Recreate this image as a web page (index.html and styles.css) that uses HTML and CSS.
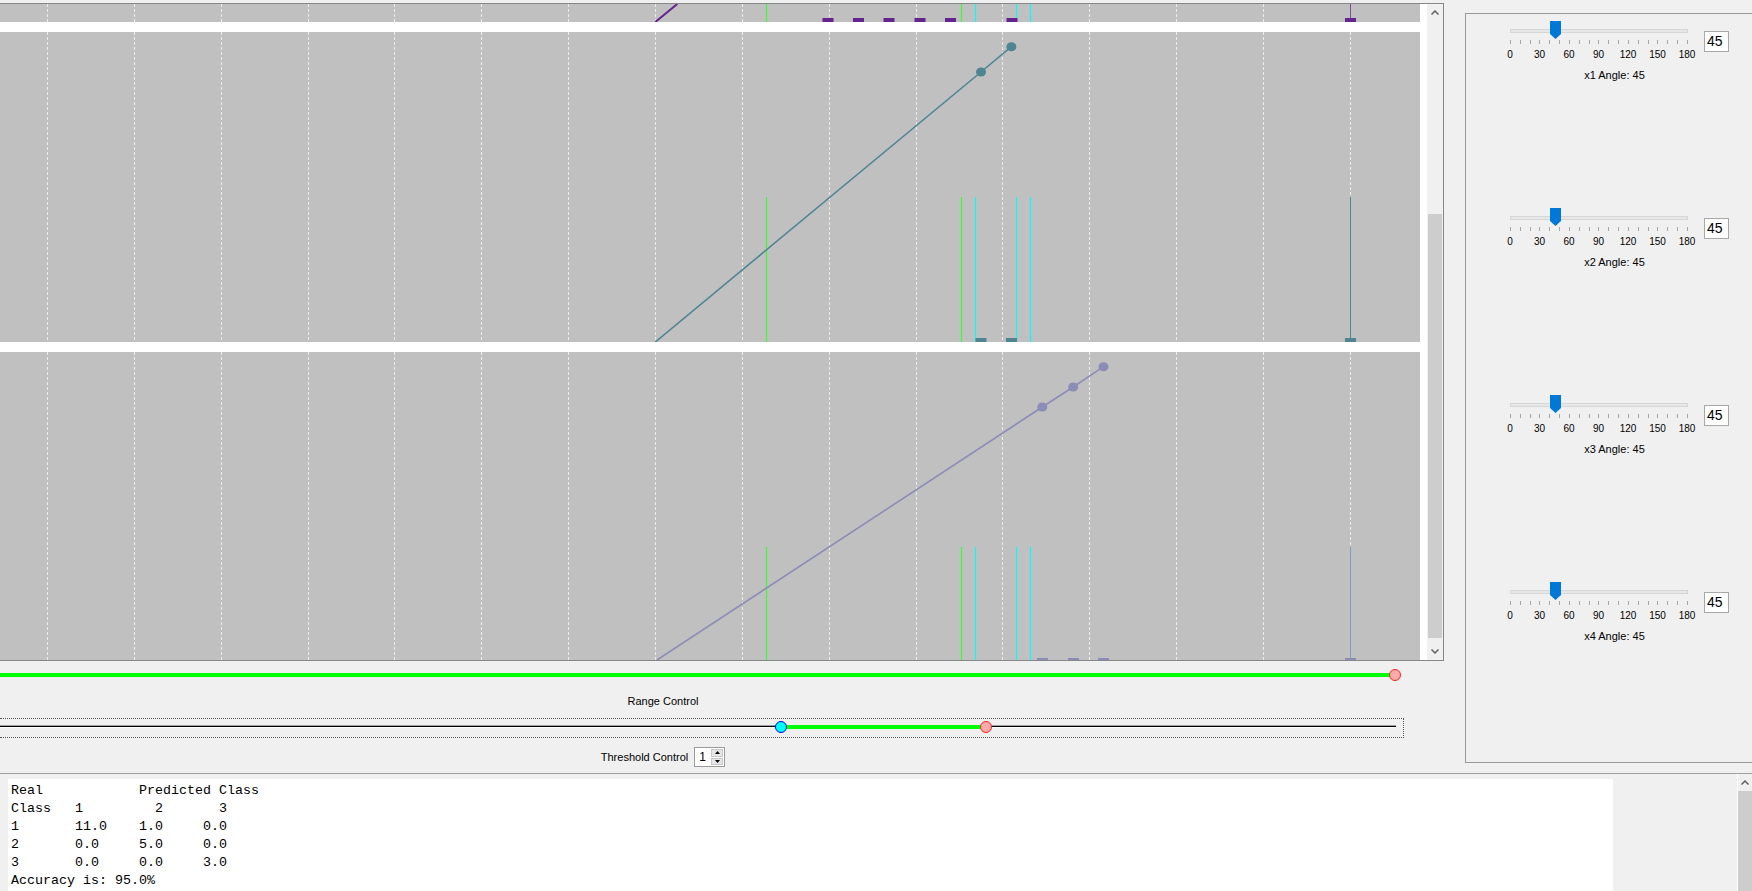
FILE: index.html
```html
<!DOCTYPE html>
<html lang="en">
<head>
<meta charset="utf-8">
<title>Classifier view</title>
<link rel="stylesheet" href="styles.css">
</head>
<body>
<div class="app">
  <div class="top">
    <div class="left-col">
      <div class="chart-frame">
        <div class="chart-content">
          <svg class="plot" width="1420" height="18" viewBox="0 0 1420 18">
            <g class="grid">
              <line x1="47.5" y1="0" x2="47.5" y2="18"/><line x1="134.5" y1="0" x2="134.5" y2="18"/><line x1="221.5" y1="0" x2="221.5" y2="18"/><line x1="308.5" y1="0" x2="308.5" y2="18"/><line x1="394.5" y1="0" x2="394.5" y2="18"/><line x1="481.5" y1="0" x2="481.5" y2="18"/><line x1="568.5" y1="0" x2="568.5" y2="18"/><line x1="655.5" y1="0" x2="655.5" y2="18"/><line x1="742.5" y1="0" x2="742.5" y2="18"/><line x1="829.5" y1="0" x2="829.5" y2="18"/><line x1="916.5" y1="0" x2="916.5" y2="18"/><line x1="1002.5" y1="0" x2="1002.5" y2="18"/><line x1="1089.5" y1="0" x2="1089.5" y2="18"/><line x1="1176.5" y1="0" x2="1176.5" y2="18"/><line x1="1263.5" y1="0" x2="1263.5" y2="18"/><line x1="1350.5" y1="0" x2="1350.5" y2="18"/>
            </g>
            <g class="green"><line x1="766.5" y1="0" x2="766.5" y2="18"/><line x1="961.5" y1="0" x2="961.5" y2="18"/></g>
            <g class="cyan"><line x1="975.5" y1="0" x2="975.5" y2="18"/><line x1="1016.5" y1="0" x2="1016.5" y2="18"/><line x1="1030.5" y1="0" x2="1030.5" y2="18"/></g>
            <line class="purple-thin" x1="1350.5" y1="0" x2="1350.5" y2="18"/>
            <polyline class="purple-line" points="655.3,18 677.3,0"/>
            <g class="purple-fill">
              <rect x="822.5" y="14" width="11" height="4"/><rect x="853" y="14" width="11" height="4"/><rect x="883.5" y="14" width="11" height="4"/><rect x="914.5" y="14" width="11" height="4"/><rect x="945" y="14" width="11" height="4"/><rect x="1006.5" y="14" width="11" height="4"/><rect x="1345" y="14" width="11" height="4"/>
            </g>
          </svg>

          <svg class="plot" width="1420" height="310" viewBox="0 0 1420 310">
            <g class="grid">
              <line x1="47.5" y1="0" x2="47.5" y2="310"/><line x1="134.5" y1="0" x2="134.5" y2="310"/><line x1="221.5" y1="0" x2="221.5" y2="310"/><line x1="308.5" y1="0" x2="308.5" y2="310"/><line x1="394.5" y1="0" x2="394.5" y2="310"/><line x1="481.5" y1="0" x2="481.5" y2="310"/><line x1="568.5" y1="0" x2="568.5" y2="310"/><line x1="655.5" y1="0" x2="655.5" y2="310"/><line x1="742.5" y1="0" x2="742.5" y2="310"/><line x1="829.5" y1="0" x2="829.5" y2="310"/><line x1="916.5" y1="0" x2="916.5" y2="310"/><line x1="1002.5" y1="0" x2="1002.5" y2="310"/><line x1="1089.5" y1="0" x2="1089.5" y2="310"/><line x1="1176.5" y1="0" x2="1176.5" y2="310"/><line x1="1263.5" y1="0" x2="1263.5" y2="310"/><line x1="1350.5" y1="0" x2="1350.5" y2="310"/>
            </g>
            <g class="green"><line x1="766.5" y1="165" x2="766.5" y2="310"/><line x1="961.5" y1="165" x2="961.5" y2="310"/></g>
            <g class="cyan"><line x1="975.5" y1="165" x2="975.5" y2="310"/><line x1="1016.5" y1="165" x2="1016.5" y2="310"/><line x1="1030.5" y1="165" x2="1030.5" y2="310"/></g>
            <line class="teal-thin" x1="1350.5" y1="165" x2="1350.5" y2="310"/>
            <polyline class="teal-line" points="655.3,310 981,40 1011.4,14.7"/>
            <g class="teal-fill">
              <ellipse cx="981" cy="40" rx="5" ry="4.5"/><ellipse cx="1011.4" cy="14.7" rx="5" ry="4.5"/>
              <rect x="975.5" y="306" width="11" height="4"/><rect x="1006" y="306" width="11" height="4"/><rect x="1345" y="306" width="11" height="4"/>
            </g>
          </svg>

          <svg class="plot" width="1420" height="308" viewBox="0 0 1420 308">
            <g class="grid">
              <line x1="47.5" y1="0" x2="47.5" y2="308"/><line x1="134.5" y1="0" x2="134.5" y2="308"/><line x1="221.5" y1="0" x2="221.5" y2="308"/><line x1="308.5" y1="0" x2="308.5" y2="308"/><line x1="394.5" y1="0" x2="394.5" y2="308"/><line x1="481.5" y1="0" x2="481.5" y2="308"/><line x1="568.5" y1="0" x2="568.5" y2="308"/><line x1="655.5" y1="0" x2="655.5" y2="308"/><line x1="742.5" y1="0" x2="742.5" y2="308"/><line x1="829.5" y1="0" x2="829.5" y2="308"/><line x1="916.5" y1="0" x2="916.5" y2="308"/><line x1="1002.5" y1="0" x2="1002.5" y2="308"/><line x1="1089.5" y1="0" x2="1089.5" y2="308"/><line x1="1176.5" y1="0" x2="1176.5" y2="308"/><line x1="1263.5" y1="0" x2="1263.5" y2="308"/><line x1="1350.5" y1="0" x2="1350.5" y2="308"/>
            </g>
            <g class="green"><line x1="766.5" y1="195" x2="766.5" y2="308"/><line x1="961.5" y1="195" x2="961.5" y2="308"/></g>
            <g class="cyan"><line x1="975.5" y1="195" x2="975.5" y2="308"/><line x1="1016.5" y1="195" x2="1016.5" y2="308"/><line x1="1030.5" y1="195" x2="1030.5" y2="308"/></g>
            <line class="blue-thin" x1="1350.5" y1="195" x2="1350.5" y2="308"/>
            <polyline class="lav-line" points="657,308 1042.3,55 1073.2,35 1103.5,14.7"/>
            <g class="lav-fill">
              <ellipse cx="1042.3" cy="55" rx="5" ry="4.5"/><ellipse cx="1073.2" cy="35" rx="5" ry="4.5"/><ellipse cx="1103.5" cy="14.7" rx="5" ry="4.5"/>
              <rect x="1037" y="306" width="11" height="4"/><rect x="1068" y="306" width="11" height="4"/><rect x="1098" y="306" width="11" height="4"/><rect x="1345" y="306" width="11" height="4"/>
            </g>
          </svg>
        </div>
        <div class="vscroll">
          <div class="sb-btn"><svg width="8" height="5" viewBox="0 0 8 5"><polyline points="0.5,4.5 4,1 7.5,4.5"/></svg></div>
          <div class="sb-track"><div class="sb-thumb"></div></div>
          <div class="sb-btn"><svg width="8" height="5" viewBox="0 0 8 5"><polyline points="0.5,0.5 4,4 7.5,0.5"/></svg></div>
        </div>
      </div>

      <div class="range-bar"><span class="knob knob-red knob-end"></span></div>
      <div class="ctl-label">Range Control</div>
      <div class="dual">
        <div class="dual-track">
          <div class="dual-sel" style="left:781px;width:205px"></div>
          <span class="knob knob-blue" style="left:775px"></span>
          <span class="knob knob-red" style="left:980px"></span>
        </div>
      </div>
      <div class="threshold">
        <span class="th-label">Threshold Control</span>
        <div class="spin">
          <span class="spin-val">1</span>
          <div class="spin-btns">
            <span class="spin-btn"><svg width="5" height="3" viewBox="0 0 5 3"><polygon points="0,3 2.5,0 5,3"/></svg></span>
            <span class="spin-btn"><svg width="5" height="3" viewBox="0 0 5 3"><polygon points="0,0 2.5,3 5,0"/></svg></span>
          </div>
        </div>
      </div>
    </div>

    <div class="angle-panel">
      <div class="angle-group">
        <div class="slider-row">
          <div class="slider">
            <div class="track-wrap"><div class="track"></div><svg class="thumb" width="11" height="18" viewBox="0 0 11 18"><path d="M0 0H11V13L5.5 18L0 13Z"/></svg></div>
            <div class="ticks"><i></i><i></i><i></i><i></i><i></i><i></i><i></i><i></i><i></i><i></i><i></i><i></i><i></i><i></i><i></i><i></i><i></i><i></i><i></i></div>
            <div class="tick-labels"><span>0</span><span>30</span><span>60</span><span>90</span><span>120</span><span>150</span><span>180</span></div>
          </div>
          <div class="numbox">45</div>
        </div>
        <div class="caption">x1 Angle: 45</div>
      </div>
      <div class="angle-group">
        <div class="slider-row">
          <div class="slider">
            <div class="track-wrap"><div class="track"></div><svg class="thumb" width="11" height="18" viewBox="0 0 11 18"><path d="M0 0H11V13L5.5 18L0 13Z"/></svg></div>
            <div class="ticks"><i></i><i></i><i></i><i></i><i></i><i></i><i></i><i></i><i></i><i></i><i></i><i></i><i></i><i></i><i></i><i></i><i></i><i></i><i></i></div>
            <div class="tick-labels"><span>0</span><span>30</span><span>60</span><span>90</span><span>120</span><span>150</span><span>180</span></div>
          </div>
          <div class="numbox">45</div>
        </div>
        <div class="caption">x2 Angle: 45</div>
      </div>
      <div class="angle-group">
        <div class="slider-row">
          <div class="slider">
            <div class="track-wrap"><div class="track"></div><svg class="thumb" width="11" height="18" viewBox="0 0 11 18"><path d="M0 0H11V13L5.5 18L0 13Z"/></svg></div>
            <div class="ticks"><i></i><i></i><i></i><i></i><i></i><i></i><i></i><i></i><i></i><i></i><i></i><i></i><i></i><i></i><i></i><i></i><i></i><i></i><i></i></div>
            <div class="tick-labels"><span>0</span><span>30</span><span>60</span><span>90</span><span>120</span><span>150</span><span>180</span></div>
          </div>
          <div class="numbox">45</div>
        </div>
        <div class="caption">x3 Angle: 45</div>
      </div>
      <div class="angle-group">
        <div class="slider-row">
          <div class="slider">
            <div class="track-wrap"><div class="track"></div><svg class="thumb" width="11" height="18" viewBox="0 0 11 18"><path d="M0 0H11V13L5.5 18L0 13Z"/></svg></div>
            <div class="ticks"><i></i><i></i><i></i><i></i><i></i><i></i><i></i><i></i><i></i><i></i><i></i><i></i><i></i><i></i><i></i><i></i><i></i><i></i><i></i></div>
            <div class="tick-labels"><span>0</span><span>30</span><span>60</span><span>90</span><span>120</span><span>150</span><span>180</span></div>
          </div>
          <div class="numbox">45</div>
        </div>
        <div class="caption">x4 Angle: 45</div>
      </div>
    </div>
  </div>

  <div class="bottom">
    <pre class="output">Real		Predicted Class
Class	1	  2	  3
1	11.0	1.0	0.0
2	0.0	5.0	0.0
3	0.0	0.0	3.0
Accuracy is: 95.0%</pre>
    <div class="spacer"></div>
    <div class="bscroll">
      <div class="sb-btn"><svg width="8" height="5" viewBox="0 0 8 5"><polyline points="0.5,4.5 4,1 7.5,4.5"/></svg></div>
      <div class="bs-thumb"></div>
    </div>
  </div>
</div>
</body>
</html>
```

FILE: styles.css
```css
html, body {
  margin: 0;
  padding: 0;
}
body {
  width: 1752px;
  height: 891px;
  overflow: hidden;
  background: #f0f0f0;
  font-family: "Liberation Sans", Arial, sans-serif;
  color: #000;
}
.app {
  width: 1752px;
  height: 891px;
}
.top {
  display: flex;
  height: 773px;
}
.left-col {
  width: 1444px;
  flex: none;
}

/* chart */
.chart-frame {
  margin-top: 3px;
  display: flex;
  height: 658px;
  box-sizing: border-box;
  border-top: 1px solid #878787;
  border-right: 1px solid #878787;
  border-bottom: 1px solid #878787;
}
.chart-content {
  width: 1427px;
  box-sizing: border-box;
  padding-right: 7px;
  height: 656px;
  background: #fff;
  overflow: hidden;
  display: flex;
  flex-direction: column;
  gap: 10px;
}
.plot {
  display: block;
  flex: none;
  background: #c0c0c0;
}
.grid line {
  stroke: #ececec;
  stroke-width: 1;
  stroke-dasharray: 3 2;
}
.green line {
  stroke: #33ff33;
  stroke-width: 1.2;
}
.cyan line {
  stroke: #00ffff;
  stroke-width: 1.2;
}
.purple-thin {
  stroke: #7b4fa8;
  stroke-width: 1;
}
.purple-line {
  fill: none;
  stroke: #65218c;
  stroke-width: 2;
}
.purple-fill {
  fill: #65238e;
}
.teal-thin {
  stroke: #4f8593;
  stroke-width: 1;
}
.teal-line {
  fill: none;
  stroke: #4f8593;
  stroke-width: 1.6;
}
.teal-fill {
  fill: #4f8593;
}
.blue-thin {
  stroke: #7d9cc4;
  stroke-width: 1;
}
.lav-line {
  fill: none;
  stroke: #8b8db6;
  stroke-width: 1.6;
}
.lav-fill {
  fill: #8b8db6;
}

/* scrollbars */
.vscroll {
  width: 16px;
  background: #f0f0f0;
  display: flex;
  flex-direction: column;
}
.sb-btn {
  height: 17px;
  flex: none;
  display: flex;
  align-items: center;
  justify-content: center;
}
.sb-btn polyline {
  fill: none;
  stroke: #606060;
  stroke-width: 1.5;
}
.sb-track {
  flex: 1;
  padding-top: 193px;
}
.sb-thumb {
  margin: 0 1px;
  height: 424px;
  background: #cdcdcd;
}

/* range controls */
.range-bar {
  position: relative;
  width: 1395px;
  height: 4px;
  margin-top: 12px;
  background: #00ff00;
}
.knob {
  position: absolute;
  width: 12px;
  height: 12px;
  box-sizing: border-box;
  border-radius: 50%;
}
.knob-red {
  border: 1px solid #ff2020;
  background: #ffaaaa;
}
.knob-blue {
  border: 1px solid #0000ff;
  background: #00ffff;
}
.knob-end {
  right: -6px;
  top: -4px;
}
.ctl-label {
  width: 1326px;
  margin-top: 18px;
  text-align: center;
  font-size: 11px;
  line-height: 13px;
}
.dual {
  margin-top: 10px;
  width: 1404px;
  height: 20px;
  box-sizing: border-box;
  border-top: 1px dotted #555;
  border-bottom: 1px dotted #555;
  border-right: 1px dotted #555;
  padding-top: 6px;
}
.dual-track {
  position: relative;
  width: 1396px;
  height: 1px;
  background: #000;
  border-top: 1px solid #a0a0a0;
  border-bottom: 1px solid #fff;
}
.dual-sel {
  position: absolute;
  top: -1px;
  height: 4px;
  background: #00ff00;
}
.dual-track .knob {
  top: -5px;
}
.threshold {
  width: 1326px;
  margin-top: 9px;
  height: 20px;
  display: flex;
  justify-content: center;
  align-items: center;
  gap: 6px;
  font-size: 11px;
}
.spin {
  display: flex;
  width: 31px;
  height: 20px;
  box-sizing: border-box;
  border: 1px solid #9a9a9a;
  background: #fff;
}
.spin-val {
  width: 15px;
  padding-left: 4px;
  box-sizing: border-box;
  font-size: 12px;
  line-height: 18px;
}
.spin-btns {
  flex: 1;
  display: flex;
  flex-direction: column;
  padding: 1px;
  gap: 1px;
}
.spin-btn {
  flex: 1;
  display: flex;
  align-items: center;
  justify-content: center;
  background: #e6e6e6;
  border: 1px solid #c8c8c8;
}
.spin-btn polygon {
  fill: #000;
}

/* angle panel */
.angle-panel {
  margin-left: 21px;
  margin-top: 13px;
  width: 320px;
  height: 750px;
  box-sizing: border-box;
  border: 1px solid #999;
  flex: none;
  padding-top: 7px;
  display: flex;
  flex-direction: column;
  gap: 126px;
}
.angle-group {
  margin-left: 34px;
  width: 229px;
}
.slider-row {
  display: flex;
  align-items: flex-start;
}
.slider {
  width: 197px;
}
.track-wrap {
  position: relative;
  height: 19px;
  box-sizing: border-box;
  padding: 8px 0 0 10px;
}
.track {
  width: 178px;
  height: 4px;
  box-sizing: border-box;
  border: 1px solid #d6d6d6;
  background: #e7e7e7;
}
.thumb {
  position: absolute;
  left: 50px;
  top: 0;
}
.thumb path {
  fill: #0078d7;
}
.ticks {
  display: flex;
  justify-content: space-between;
  margin-left: 10px;
  width: 178px;
  height: 4px;
}
.ticks i {
  display: block;
  width: 1px;
  height: 4px;
  background: #a6a6a6;
}
.tick-labels {
  display: flex;
  justify-content: space-between;
  padding-top: 5px;
  font-size: 10px;
  line-height: 12px;
}
.tick-labels span {
  width: 20px;
  text-align: center;
}
.numbox {
  margin-left: 7px;
  margin-top: 10px;
  width: 25px;
  height: 21px;
  box-sizing: border-box;
  border: 1px solid #a8a8a8;
  background: #fff;
  font-size: 14px;
  line-height: 19px;
  padding-left: 2px;
}
.caption {
  padding-top: 8px;
  text-align: center;
  font-size: 11px;
  line-height: 13px;
}

/* bottom output */
.bottom {
  display: flex;
  height: 118px;
  border-top: 1px solid #a0a0a0;
}
.output {
  margin: 5px 0 0 8px;
  width: 1605px;
  box-sizing: border-box;
  background: #fff;
  padding: 3px 0 0 3px;
  font-family: "Liberation Mono", "Courier New", monospace;
  font-size: 13.33px;
  line-height: 18px;
  tab-size: 8;
  -moz-tab-size: 8;
  white-space: pre;
  overflow: hidden;
}
.spacer {
  flex: 1;
}
.bscroll {
  width: 14px;
  border-left: 1px solid #fff;
  background: #f0f0f0;
  display: flex;
  flex-direction: column;
}
.bs-thumb {
  flex: 1;
  background: #cdcdcd;
}
```
